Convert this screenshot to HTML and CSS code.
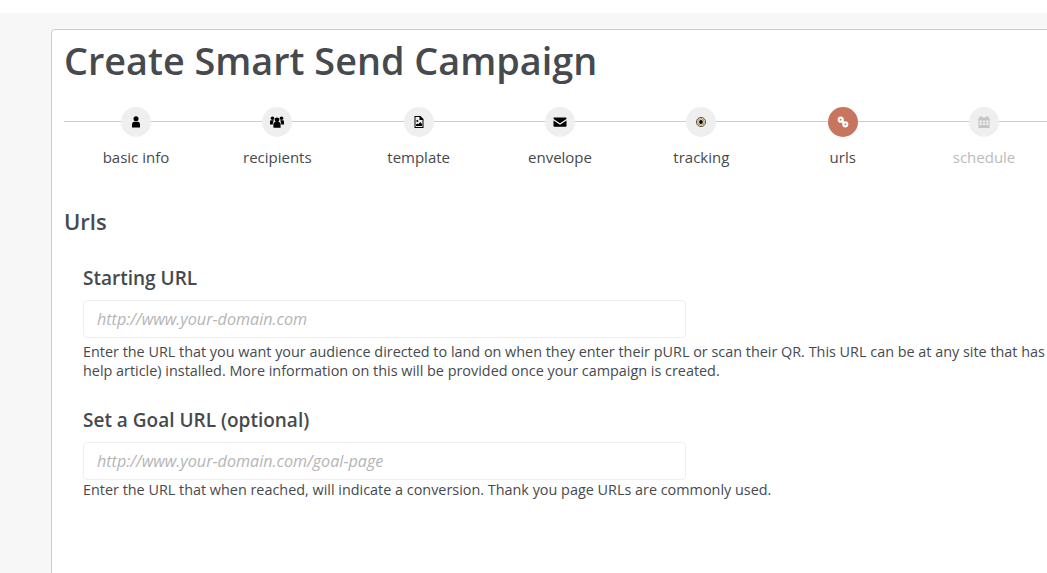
FILE: index.html
```html
<!DOCTYPE html>
<html lang="en">
<head>
<meta charset="utf-8">
<title>Create Smart Send Campaign</title>
<link rel="stylesheet" href="styles.css">
</head>
<body>
<main class="page">
  <section class="card">
    <h1 class="title">Create Smart Send Campaign</h1>
    <ol class="steps">
      <li class="step">
        <span class="dot"><svg class="icon" viewBox="0 0 14 12"><circle cx="7" cy="2.700" r="2.500"/><path d="M3 11.500V8.400C3 6.700 4 5.700 5.400 5.700h3.200C10 5.700 11 6.700 11 8.400v3.100z"/></svg></span>
        <span class="label">basic info</span>
      </li>
      <li class="step">
        <span class="dot"><svg class="icon" viewBox="0 0 14 12"><circle cx="7" cy="3.800" r="2.400"/><circle cx="2.500" cy="2.200" r="1.800"/><circle cx="11.500" cy="2.200" r="1.800"/><path d="M3.400 11.800V8.300c0-1.500.9-2.300 2-2.300h3.200c1.100 0 2 .8 2 2.300v3.500z"/><path d="M0 8.400V5.500C0 4.600.6 4.200 1.400 4.200h2.400C3.300 5.500 2.800 6.500 2.800 8.400zM14 8.400V5.500c0-.9-.6-1.300-1.400-1.300h-2.400c.5 1.300 1 2.300 1 4.200z"/></svg></span>
        <span class="label">recipients</span>
      </li>
      <li class="step">
        <span class="dot"><svg class="icon" viewBox="0 0 14 12"><path fill-rule="evenodd" d="M2.500 0H8.500L11.500 3V12H2.500zM3.500 1V11H10.500V4H7.500V1z"/><circle cx="5.300" cy="5" r="1"/><path d="M4 10V8.600L5.300 7.500 6.300 8.300 8.300 6 10 8V10z"/></svg></span>
        <span class="label">template</span>
      </li>
      <li class="step">
        <span class="dot"><svg class="icon" viewBox="0 0 14 12"><path d="M.5 2.300C.5 1.500 1.100 1.500 1.600 1.500H12.400C13 1.500 13.500 1.700 13.500 2.400 13.500 3 13.100 3.300 12.700 3.600L7 7.300 1.300 3.600C.9 3.300.5 3 .5 2.300z"/><path d="M.5 4.600 7 8.800 13.500 4.600V10C13.500 10.500 13 10.800 12.400 10.800H1.600C1 10.800.5 10.500.5 10z"/></svg></span>
        <span class="label">envelope</span>
      </li>
      <li class="step">
        <span class="dot"><svg class="icon" viewBox="0 0 14 12"><circle cx="7" cy="6" r="4.600" fill="none" stroke="#555" stroke-width="1"/><circle cx="7" cy="6" r="3.200" fill="none" stroke="#c9862c" stroke-width="1"/><circle cx="7" cy="6" r="1.900"/></svg></span>
        <span class="label">tracking</span>
      </li>
      <li class="step step-active">
        <span class="dot"><svg class="icon" viewBox="0 0 14 12"><circle cx="4.700" cy="3.700" r="2" fill="none" stroke="#fff" stroke-width="2.200"/><circle cx="9.300" cy="8.300" r="2" fill="none" stroke="#fff" stroke-width="2.200"/><path d="M5.700 4.700 8.300 7.300" fill="none" stroke="#fff" stroke-width="2"/></svg></span>
        <span class="label">urls</span>
      </li>
      <li class="step step-todo">
        <span class="dot"><svg class="icon" viewBox="0 0 14 12"><path fill-rule="evenodd" d="M1.500 1.500h2V0h1.500v1.500h4V0h1.500v1.500h2v10.500h-11zM2.500 4.400v2.100h2.500V4.400zM5.800 4.400v2.100h2.400V4.400zM9 4.400v2.100h2.500V4.400zM2.500 7.300v2h2.500v-2zM5.800 7.300v2h2.400v-2zM9 7.300v2h2.500v-2z"/></svg></span>
        <span class="label">schedule</span>
      </li>
    </ol>
    <h2 class="section-title">Urls</h2>
    <form class="fields">
      <div class="field">
        <label class="field-label" for="start-url">Starting URL</label>
        <input class="input" id="start-url" type="text" placeholder="http://www.your-domain.com">
        <p class="help help-spaced">Enter the URL that you want your audience directed to land on when they enter their pURL or scan their QR. This URL can be at any site that has<br>help article) installed. More information on this will be provided once your campaign is created.</p>
      </div>
      <div class="field">
        <label class="field-label" for="goal-url">Set a Goal URL (optional)</label>
        <input class="input" id="goal-url" type="text" placeholder="http://www.your-domain.com/goal-page">
        <p class="help">Enter the URL that when reached, will indicate a conversion. Thank you page URLs are commonly used.</p>
      </div>
    </form>
  </section>
</main>
</body>
</html>
```
FILE: styles.css
```css
* { box-sizing: border-box; }
html, body { margin: 0; height: 100%; overflow: hidden; background: #fff; }
body {
  padding-top: 13px;
  font-family: "Open Sans", "Noto Sans", sans-serif;
  color: #464a4e;
}
.page {
  height: 560px;
  padding: 16px 0 0 51px;
  background: #f7f7f7;
  overflow: hidden;
}
.card {
  width: 1300px;
  height: 600px;
  padding: 5px 12px 0;
  background: #fff;
  border: 1px solid #ccc;
  border-radius: 4px;
}
.title {
  margin: 0;
  font-size: 37.800px;
  line-height: 52px;
  font-weight: 600;
  color: #464a4e;
}
.steps {
  display: flex;
  margin: 20px 0 0;
  padding: 0 0 0 1.300px;
  list-style: none;
  background: linear-gradient(#ccc, #ccc) 0 14px / 100% 1px no-repeat;
}
.step {
  flex: 0 0 141.350px;
  display: flex;
  flex-direction: column;
  align-items: center;
  gap: 10px;
  font-size: 15px;
  line-height: 20px;
  color: #464a4e;
}
.dot {
  width: 30px;
  height: 30px;
  display: flex;
  align-items: center;
  justify-content: center;
  border-radius: 50%;
  background: #efefef;
}
.icon { width: 14px; height: 12px; fill: #000; }
.step-active .dot { background: #c87560; }
.step-todo .label { color: #bbb; }
.step-todo .icon { fill: #c4c4c4; }
.section-title {
  margin: 39px 0 0;
  font-size: 22px;
  line-height: 30px;
  font-weight: 600;
}
.fields { padding: 29px 0 0 19px; }
.field { margin-bottom: 27px; }
.field-label {
  display: block;
  font-size: 19px;
  line-height: 26px;
  font-weight: 600;
  margin-bottom: 9px;
}
.input {
  display: block;
  width: 603px;
  height: 38px;
  padding: 0 13px;
  border: 1px solid #efefef;
  border-radius: 4px;
  background: #fff;
  font: italic 16.150px "Open Sans", sans-serif;
}
.input::placeholder { color: #b5b5b5; opacity: 1; }
.help {
  margin: 0;
  font-size: 14.400px;
  line-height: 19px;
  white-space: nowrap;
}
.help-spaced { margin-top: 4px; }
```
